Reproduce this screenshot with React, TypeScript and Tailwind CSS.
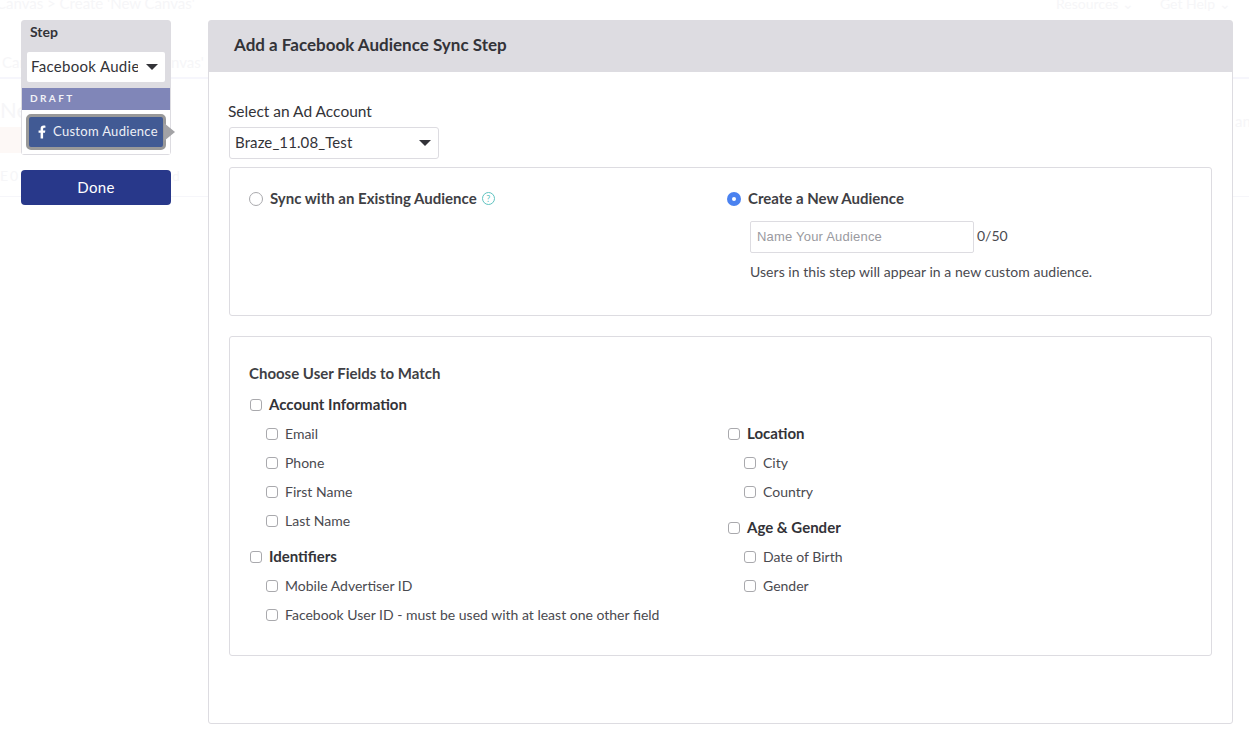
const font = "font-['Lato',sans-serif]"

function Check({ label, bold }: { label: string; bold?: boolean }) {
  return (
    <div className="flex items-center h-[29px]">
      <span className="w-[12px] h-[12px] rounded-[3px] border border-[#a9a9ad] bg-white shrink-0" />
      <span className={bold ? 'ml-[7px] text-[15px] font-bold text-[#333338]' : 'ml-[7px] text-[14px] text-[#4a4a50]'}>{label}</span>
    </div>
  )
}

function Group({ title, items }: { title: string; items: string[] }) {
  return (
    <div className="mb-[7px]">
      <Check label={title} bold />
      <div className="pl-[16px]">
        {items.map((item) => (
          <Check key={item} label={item} />
        ))}
      </div>
    </div>
  )
}

function Caret() {
  return <span className="ml-auto block w-0 h-0 shrink-0 border-x-[6px] border-x-transparent border-t-[6px] border-t-[#333338]" />
}

// faint page behind the white overlay
function Ghost() {
  return (
    <div className="absolute inset-0 text-[#f6f6f8] text-[14px] whitespace-nowrap">
      <div className="absolute left-[-4px] top-[-8px] text-[15px]">Canvas &gt; Create 'New Canvas'</div>
      <div className="absolute left-[1056px] top-[-7px] flex gap-[26px] text-[14px]">
        <span>Resources ⌄</span>
        <span>Get Help ⌄</span>
      </div>
      <div className="absolute left-[2px] top-[51px] text-[15px]">Can</div>
      <div className="absolute left-[171px] top-[51px] text-[15px]">nvas'</div>
      <div className="absolute left-[1235px] top-[110px] text-[15px]">anvas</div>
      <div className="absolute left-0 top-[93px] text-[22px]">Ne</div>
      <div className="absolute left-0 top-[127px] h-[26px] w-[21px] bg-[#fdf8f6]" />
      <div className="absolute left-0 top-[165px] text-[14px] tracking-[2px]">E0</div>
      <div className="absolute left-[172px] top-[165px] text-[14px]">d</div>
      <div className="absolute left-0 top-[77px] h-[2px] w-full bg-[#f6f6fc]" />
      <div className="absolute left-0 top-[196px] h-px w-full bg-[#f6f6fa]" />
    </div>
  )
}

export default function App() {
  return (
    <div className={`relative h-[736px] w-[1249px] overflow-hidden bg-white ${font}`}>
      <Ghost />
      <div className="relative flex items-start pt-[20px] pl-[21px]">
        <div className="w-[150px] shrink-0">
          <div className="rounded-[3px] border border-[#dddce1]">
            <div className="bg-[#dddce1] h-[67px] px-[5px]">
              <div className="pl-[3px] pt-[2px] text-[14px] font-bold leading-[18px] text-[#333338]">Step</div>
              <div className="mt-[11px] flex h-[30px] items-center rounded-[2px] bg-white pl-[4px] pr-[7px]">
                <span className="w-[107px] -translate-y-[1px] overflow-hidden whitespace-nowrap text-[15px] tracking-[0.3px] text-[#333338]">Facebook Audience</span>
                <Caret />
              </div>
            </div>
            <div className="flex h-[22px] items-center bg-[#8086b8] pb-[1px] pl-[8px] text-[10px] font-bold tracking-[2.4px] text-[#f1f1f7]">DRAFT</div>
            <div className="relative h-[44px] bg-white px-[4px] pt-[4px]">
              <div className="flex h-[36px] items-center rounded-[5px] border-[3px] border-[#999999] bg-[#415a94] pl-[9px] text-[13px] tracking-[0.3px] text-[#eef0f6]">
                <svg viewBox="0 0 320 512" className="h-[14px] w-[8px] fill-white">
                  <path d="M279 288l14-93h-89v-60c0-25 12-50 52-50h41V6s-37-6-72-6c-73 0-121 44-121 125v70H23v93h81v224h100V288z" />
                </svg>
                <span className="ml-[7px] whitespace-nowrap">Custom Audience</span>
              </div>
              <span className="absolute left-[142px] top-[13px] h-0 w-0 border-y-[9px] border-l-[11px] border-y-transparent border-l-[#a3a3a6]" />
            </div>
          </div>
          <div className="mt-[15px] flex h-[35px] items-center justify-center rounded-[4px] bg-[#28388a] pb-[1px] text-[15px] tracking-[0.3px] text-white">Done</div>
        </div>

        <div className="ml-[37px] h-[704px] w-[1025px] rounded-[3px] border border-[#dddce1] bg-white">
          <div className="flex h-[51px] items-center bg-[#dddce1] pb-[3px] pl-[25px] text-[17px] font-bold text-[#333338]">Add a Facebook Audience Sync Step</div>
          <div className="px-[20px]">
            <div className="-ml-px mt-[30px] text-[15.5px] leading-[18px] text-[#333338]">Select an Ad Account</div>
            <div className="mt-[7px] flex h-[32px] w-[210px] items-center rounded-[3px] border border-[#dddce1] pb-[1px] pl-[5px] pr-[7px] text-[15px] tracking-[0.1px] text-[#333338]">
              Braze_11.08_Test
              <Caret />
            </div>

            <div className="mt-[8px] flex h-[149px] w-[983px] rounded-[3px] border border-[#dddce1] pl-[19px] pt-[21px]">
              <div className="flex h-[18px] w-[478px] items-center">
                <span className="h-[14px] w-[14px] translate-y-[1px] rounded-full border border-[#a9a9ad]" />
                <span className="ml-[7px] text-[15px] font-bold text-[#3f3f45]">Sync with an Existing Audience</span>
                <span className="ml-[5px] flex h-[13px] w-[13px] items-center justify-center rounded-full border border-[#5fc3c0] text-[9px] leading-none text-[#5fc3c0]">?</span>
              </div>
              <div>
                <div className="flex h-[18px] items-center">
                  <span className="flex h-[14px] w-[14px] translate-y-[1px] items-center justify-center rounded-full bg-[#4a82f0]">
                    <span className="h-[4px] w-[4px] rounded-full bg-white" />
                  </span>
                  <span className="ml-[7px] text-[15px] font-bold text-[#3f3f45]">Create a New Audience</span>
                </div>
                <div className="ml-[23px] mt-[14px] flex items-start">
                  <div className="flex h-[32px] w-[224px] items-center rounded-[2px] border border-[#dddce1] pl-[6px] font-['Liberation_Sans',sans-serif] text-[13px] tracking-[0.2px] text-[#9a9aa0]">Name Your Audience</div>
                  <span className="ml-[3px] mt-[4px] text-[14px] text-[#4a4a50]">0/50</span>
                </div>
                <div className="ml-[23px] mt-[8px] text-[14px] tracking-[0.04px] text-[#4a4a50]">Users in this step will appear in a new custom audience.</div>
              </div>
            </div>

            <div className="mt-[20px] h-[320px] w-[983px] rounded-[3px] border border-[#dddce1] pl-[19px] pt-[27px]">
              <div className="text-[15px] font-bold leading-[18px] text-[#3f3f45]">Choose User Fields to Match</div>
              <div className="mt-[8px] flex">
                <div className="ml-px w-[478px]">
                  <Group title="Account Information" items={['Email', 'Phone', 'First Name', 'Last Name']} />
                  <Group title="Identifiers" items={['Mobile Advertiser ID', 'Facebook User ID - must be used with at least one other field']} />
                </div>
                <div className="pt-[29px]">
                  <Group title="Location" items={['City', 'Country']} />
                  <Group title="Age & Gender" items={['Date of Birth', 'Gender']} />
                </div>
              </div>
            </div>
          </div>
        </div>
      </div>
    </div>
  )
}
